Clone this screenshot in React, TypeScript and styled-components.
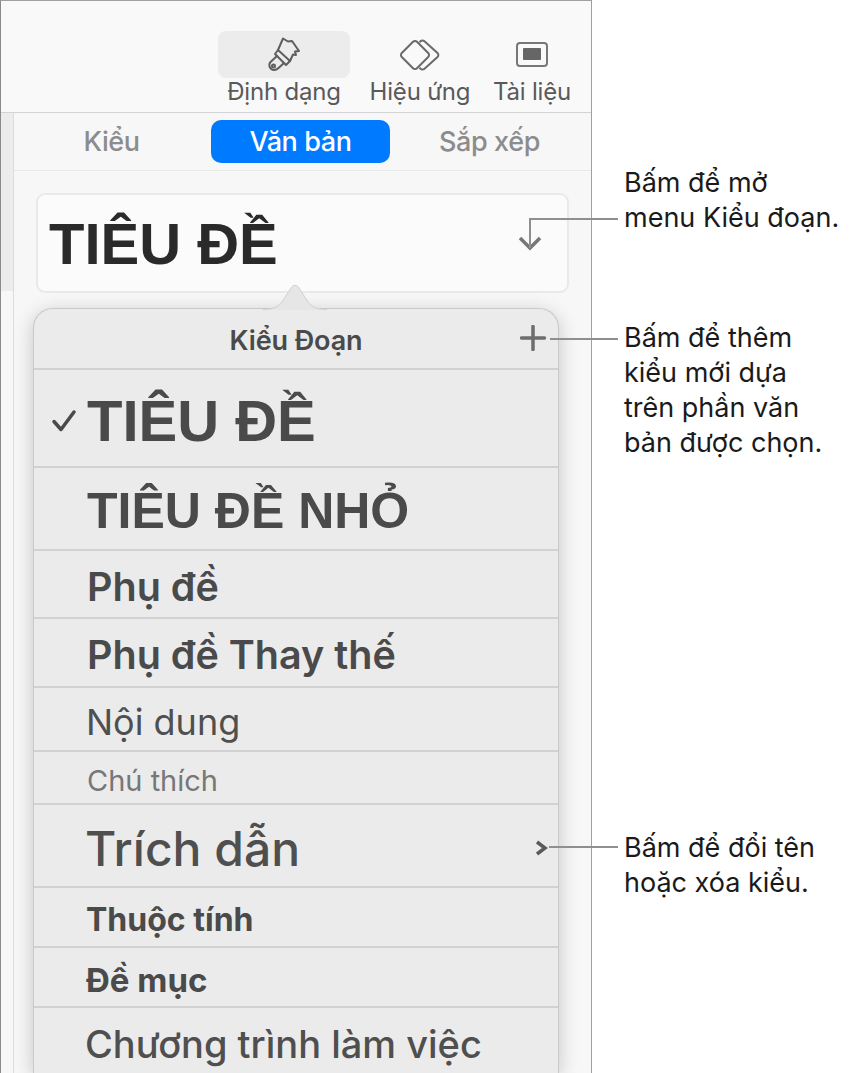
import styled, { createGlobalStyle } from "styled-components";

const GlobalStyle = createGlobalStyle`
  html, body {
    margin: 0;
    padding: 0;
    background: #fff;
  }
`;

const Page = styled.div`
  position: relative;
  display: flex;
  width: 865px;
  height: 1073px;
  overflow: hidden;
  background: #fff;
  font-family: Inter, "Liberation Sans", sans-serif;
`;

const Panel = styled.div`
  flex: none;
  display: flex;
  flex-direction: column;
  box-sizing: border-box;
  width: 592px;
  height: 1073px;
  background: #f7f7f7;
  border-top: 1px solid #a0a0a0;
  border-right: 1px solid #a0a0a0;
  border-left: 1px solid #8a8a8a;
`;

const Toolbar = styled.div`
  flex: none;
  display: flex;
  justify-content: flex-end;
  gap: 16px;
  box-sizing: border-box;
  height: 112px;
  padding: 30px 17px 0 0;
  background: #f9f9f9;
  border-bottom: 1px solid #d4d4d4;
`;

const ToolItem = styled.div<{ $width: number }>`
  display: flex;
  flex-direction: column;
  align-items: center;
  width: ${(p) => p.$width}px;
`;

const ToolIcon = styled.div<{ $active?: boolean }>`
  display: flex;
  align-items: center;
  justify-content: center;
  width: 100%;
  height: 47px;
  border-radius: 8px;
  background: ${(p) => (p.$active ? "#ececec" : "transparent")};
`;

const ToolLabel = styled.span`
  font-size: 24px;
  line-height: 28px;
  color: #5a5a5a;
  letter-spacing: -0.2px;
  white-space: nowrap;
`;

const Body = styled.div`
  flex: 1;
  display: flex;
  min-height: 0;
`;

const Strip = styled.div`
  flex: none;
  width: 12px;
  height: 178px;
  background: #ececec;
`;

const Main = styled.div`
  flex: 1;
  display: flex;
  flex-direction: column;
  position: relative;
  min-width: 0;
  border-left: 1px solid #dcdcdc;
`;

const Tabs = styled.div`
  flex: none;
  display: grid;
  grid-template-columns: repeat(3, 179px);
  column-gap: 10px;
  box-sizing: border-box;
  height: 58px;
  padding: 7px 0 0 8px;
  border-bottom: 1px solid #e8e8e8;
`;

const Tab = styled.div<{ $active?: boolean }>`
  display: flex;
  align-items: center;
  justify-content: center;
  height: 43px;
  border-radius: 10px;
  background: ${(p) => (p.$active ? "#007aff" : "transparent")};
  color: ${(p) => (p.$active ? "#fff" : "#8c8c8c")};
  font-size: 27px;
  font-weight: 500;
  letter-spacing: -0.4px;
`;

const StyleBox = styled.div`
  flex: none;
  display: flex;
  align-items: center;
  justify-content: space-between;
  box-sizing: border-box;
  width: 533px;
  height: 100px;
  margin: 22px 0 0 22px;
  padding: 0 25px 0 11px;
  background: #fbfbfb;
  border: 2px solid #e9e9e9;
  border-radius: 9px;
`;

const BoxTitle = styled.span`
  font-family: "Liberation Sans", Arial, sans-serif;
  font-size: 58px;
  font-weight: 700;
  color: #2a2a2a;
  white-space: nowrap;
`;

const Popover = styled.div`
  position: relative;
  flex: 1;
  display: flex;
  flex-direction: column;
  box-sizing: border-box;
  width: 526px;
  margin: 15px 0 0 19px;
  background: #ebebeb;
  border: 1px solid #c9c9c9;
  border-bottom: 0;
  border-radius: 20px 20px 0 0;
  box-shadow: 0 4px 20px rgba(0, 0, 0, 0.2);
`;

const PopoverTip = styled.svg`
  position: absolute;
  left: 229px;
  top: -27px;
`;

const PopoverHeader = styled.div`
  position: relative;
  flex: none;
  display: flex;
  align-items: center;
  justify-content: center;
  box-sizing: border-box;
  height: 61px;
  padding-top: 3px;
  border-bottom: 2px solid #d2d2d2;
  font-size: 27px;
  font-weight: 600;
  letter-spacing: -0.1px;
  color: #4a4a4a;
`;

const PlusIcon = styled.svg`
  position: absolute;
  right: 12px;
  top: 16px;
`;

const Row = styled.div<{ $height: number }>`
  flex: none;
  display: flex;
  align-items: center;
  box-sizing: border-box;
  height: ${(p) => p.$height}px;
  padding: 5px 10px 0 0;
  border-bottom: 2px solid #d2d2d2;

  &:last-child {
    border-bottom: 0;
  }
`;

const CheckSlot = styled.div`
  flex: none;
  display: flex;
  align-items: center;
  justify-content: flex-end;
  box-sizing: border-box;
  width: 53px;
  padding-right: 10px;
`;

const RowText = styled.span<{ $size: number; $weight: number; $color: string; $family: string; $shift: number }>`
  flex: 1;
  margin-left: ${(p) => p.$shift}px;
  font-family: ${(p) => p.$family};
  font-size: ${(p) => p.$size}px;
  font-weight: ${(p) => p.$weight};
  color: ${(p) => p.$color};
  white-space: nowrap;
`;

const Callouts = styled.div`
  flex: 1;
  display: flex;
  flex-direction: column;
  padding-left: 32px;
`;

const Callout = styled.p<{ $top: number }>`
  margin: ${(p) => p.$top}px 0 0;
  font-size: 27px;
  line-height: 35px;
  color: #1a1a1a;
  white-space: pre-line;
`;

const Leader = styled.div<{ $x: number; $y: number; $w: number; $h: number }>`
  position: absolute;
  left: ${(p) => p.$x}px;
  top: ${(p) => p.$y}px;
  width: ${(p) => p.$w}px;
  height: ${(p) => p.$h}px;
  background: #8f8f8f;
`;

const ARIAL = `"Liberation Sans", Arial, sans-serif`;
const INTER = `Inter, "Liberation Sans", sans-serif`;

const rows = [
  { label: "TIÊU ĐỀ", height: 98, size: 58, weight: 700, color: "#4a4a4a", family: ARIAL, shift: 0, checked: true },
  { label: "TIÊU ĐỀ NHỎ", height: 83, size: 50, weight: 700, color: "#4a4a4a", family: ARIAL, shift: 0 },
  { label: "Phụ đề", height: 68, size: 39.5, weight: 600, color: "#4a4a4a", family: INTER, shift: 0 },
  { label: "Phụ đề Thay thế", height: 69, size: 39.5, weight: 600, color: "#4a4a4a", family: INTER, shift: 0 },
  { label: "Nội dung", height: 64, size: 36, weight: 400, color: "#4f4f4f", family: INTER, shift: -1 },
  { label: "Chú thích", height: 53, size: 29, weight: 400, color: "#777", family: INTER, shift: 0 },
  { label: "Trích dẫn", height: 83, size: 48, weight: 500, color: "#4f4f4f", family: INTER, shift: -2 },
  { label: "Thuộc tính", height: 60, size: 32, weight: 700, color: "#4a4a4a", family: INTER, shift: -1 },
  { label: "Đề mục", height: 60, size: 33, weight: 700, color: "#4a4a4a", family: INTER, shift: -1 },
  { label: "Chương trình làm việc", height: 66, size: 38, weight: 500, color: "#4f4f4f", family: INTER, shift: -2 },
];

function BrushIcon() {
  return (
    <svg width="32" height="36" viewBox="0 0 32 36" fill="none" stroke="#5e5e5e" strokeWidth="2" strokeLinejoin="round" strokeLinecap="round">
      <path d="M15 1.500L20 4.500L24 4L31 14L27 14.500L28 18L25 17.500L22 24L10 13Z" />
      <path d="M10 13L7 17L18 28L22 24" />
      <path d="M9 19L2.500 25C0 28 2 33 6 33C8 33 9.500 32 10.500 31L16 26" />
      <circle cx="5.500" cy="29" r="1.500" />
    </svg>
  );
}

function EffectsIcon() {
  return (
    <svg width="42" height="32" viewBox="0 0 42 32" fill="none" stroke="#6a6a6a" strokeWidth="2" strokeLinejoin="round">
      <path d="M14 2.800a2.800 2.800 0 0 1 4 0L29.200 14a2.800 2.800 0 0 1 0 4L18 29.200a2.800 2.800 0 0 1-4 0L2.800 18a2.800 2.800 0 0 1 0-4Z" />
      <path d="M20.500 3.200L21.500 2.300a2.800 2.800 0 0 1 4 0L38.500 14a2.800 2.800 0 0 1 0 4L25.500 29.700a2.800 2.800 0 0 1-4 0L20.500 28.800" />
    </svg>
  );
}

function DocumentIcon() {
  return (
    <svg width="32" height="25" viewBox="0 0 32 25" fill="none">
      <rect x="1" y="1" width="30" height="23" rx="3" stroke="#777" strokeWidth="2" />
      <rect x="7" y="6" width="18" height="12" rx="1" fill="#666" />
    </svg>
  );
}

function App() {
  return (
    <Page>
      <GlobalStyle />
      <Panel>
        <Toolbar>
          <ToolItem $width={132}>
            <ToolIcon $active>
              <BrushIcon />
            </ToolIcon>
            <ToolLabel>Định dạng</ToolLabel>
          </ToolItem>
          <ToolItem $width={108}>
            <ToolIcon>
              <EffectsIcon />
            </ToolIcon>
            <ToolLabel>Hiệu ứng</ToolLabel>
          </ToolItem>
          <ToolItem $width={84}>
            <ToolIcon>
              <DocumentIcon />
            </ToolIcon>
            <ToolLabel>Tài liệu</ToolLabel>
          </ToolItem>
        </Toolbar>
        <Body>
          <Strip />
          <Main>
            <Tabs>
              <Tab>Kiểu</Tab>
              <Tab $active>Văn bản</Tab>
              <Tab>Sắp xếp</Tab>
            </Tabs>
            <StyleBox>
              <BoxTitle>TIÊU ĐỀ</BoxTitle>
              <svg width="24" height="15" viewBox="0 0 24 15" fill="none">
                <path d="M2 2l10 10L22 2" stroke="#777" strokeWidth="3.500" />
              </svg>
            </StyleBox>
            <Popover>
              <PopoverTip width="64" height="28" viewBox="0 0 64 28">
                <path d="M0 27.500C10 27.500 15 25 19 20L28 6C30 2.500 34 2.500 36 6L45 20C49 25 54 27.500 64 27.500V28H0Z" fill="#e6e6e6" />
                <path d="M0 27.500C10 27.500 15 25 19 20L28 6C30 2.500 34 2.500 36 6L45 20C49 25 54 27.500 64 27.500" fill="none" stroke="#d0d0d0" />
              </PopoverTip>
              <PopoverHeader>
                Kiểu Đoạn
                <PlusIcon width="26" height="26" viewBox="0 0 26 26">
                  <path d="M13 1.500v23M1.500 13h23" stroke="#6e6e6e" strokeWidth="3.500" strokeLinecap="round" />
                </PlusIcon>
              </PopoverHeader>
              {rows.map((row) => (
                <Row key={row.label} $height={row.height}>
                  <CheckSlot>
                    {row.checked && (
                      <svg width="26" height="24" viewBox="0 0 26 24" fill="none">
                        <path d="M3 12.500L10 20.500L23 3" stroke="#4a4a4a" strokeWidth="3.500" strokeLinecap="round" strokeLinejoin="round" />
                      </svg>
                    )}
                  </CheckSlot>
                  <RowText $size={row.size} $weight={row.weight} $color={row.color} $family={row.family} $shift={row.shift}>
                    {row.label}
                  </RowText>
                  {row.label === "Trích dẫn" && (
                    <svg width="13" height="16" viewBox="0 0 13 16" fill="none">
                      <path d="M2 2l8 6-8 6" stroke="#5a5a5a" strokeWidth="3.500" />
                    </svg>
                  )}
                </Row>
              ))}
            </Popover>
          </Main>
        </Body>
      </Panel>
      <Callouts>
        <Callout $top={165}>{"Bấm để mở\nmenu Kiểu đoạn."}</Callout>
        <Callout $top={85}>{"Bấm để thêm\nkiểu mới dựa\ntrên phần văn\nbản được chọn."}</Callout>
        <Callout $top={370}>{"Bấm để đổi tên\nhoặc xóa kiểu."}</Callout>
      </Callouts>
      <Leader $x={529} $y={218} $w={89} $h={2} />
      <Leader $x={529} $y={218} $w={2} $h={30} />
      <Leader $x={550} $y={338} $w={68} $h={2} />
      <Leader $x={549} $y={846} $w={69} $h={2} />
    </Page>
  );
}

export default App;
